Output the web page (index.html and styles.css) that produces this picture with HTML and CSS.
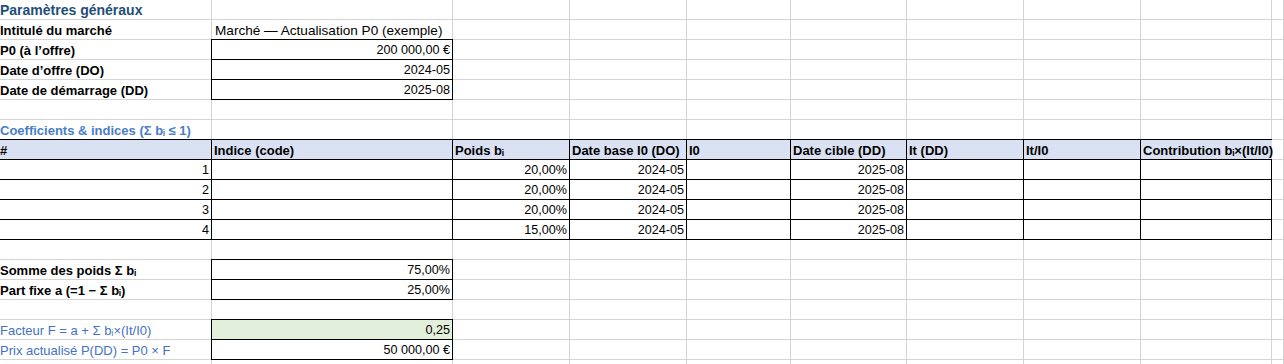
FILE: index.html
```html
<!DOCTYPE html>
<html lang="fr">
<head>
<meta charset="utf-8">
<title>Actualisation P0</title>
<link rel="stylesheet" href="styles.css">
</head>
<body>
<div class="sheet">
  <!-- row 1 -->
  <div class="title">Paramètres généraux</div><div></div><div></div><div></div><div></div><div></div><div></div><div></div><div></div><div></div>
  <!-- row 2 -->
  <div class="lbl">Intitulé du marché</div><div class="txt">Marché — Actualisation P0 (exemple)</div><div></div><div></div><div></div><div></div><div></div><div></div><div></div><div></div>
  <!-- row 3 -->
  <div class="lbl">P0 (à l’offre)</div><div class="bx num">200 000,00 €</div><div></div><div></div><div></div><div></div><div></div><div></div><div></div><div></div>
  <!-- row 4 -->
  <div class="lbl">Date d’offre (DO)</div><div class="bx num">2024-05</div><div></div><div></div><div></div><div></div><div></div><div></div><div></div><div></div>
  <!-- row 5 -->
  <div class="lbl">Date de démarrage (DD)</div><div class="bx num">2025-08</div><div></div><div></div><div></div><div></div><div></div><div></div><div></div><div></div>
  <!-- row 6 -->
  <div></div><div></div><div></div><div></div><div></div><div></div><div></div><div></div><div></div><div></div>
  <!-- row 7 -->
  <div class="section">Coefficients &amp; indices (Σ bᵢ ≤ 1)</div><div></div><div></div><div></div><div></div><div></div><div></div><div></div><div></div><div></div>
  <!-- row 8 header -->
  <div class="bx hd">#</div><div class="bx hd">Indice (code)</div><div class="bx hd">Poids bᵢ</div><div class="bx hd">Date base I0 (DO)</div><div class="bx hd">I0</div><div class="bx hd">Date cible (DD)</div><div class="bx hd">It (DD)</div><div class="bx hd">It/I0</div><div class="bx hd hd-last">Contribution bᵢ×(It/I0)</div><div></div>
  <!-- rows 9-12 -->
  <div class="bx num">1</div><div class="bx"></div><div class="bx num">20,00%</div><div class="bx num">2024-05</div><div class="bx"></div><div class="bx num">2025-08</div><div class="bx"></div><div class="bx"></div><div class="bx"></div><div></div>
  <div class="bx num">2</div><div class="bx"></div><div class="bx num">20,00%</div><div class="bx num">2024-05</div><div class="bx"></div><div class="bx num">2025-08</div><div class="bx"></div><div class="bx"></div><div class="bx"></div><div></div>
  <div class="bx num">3</div><div class="bx"></div><div class="bx num">20,00%</div><div class="bx num">2024-05</div><div class="bx"></div><div class="bx num">2025-08</div><div class="bx"></div><div class="bx"></div><div class="bx"></div><div></div>
  <div class="bx num">4</div><div class="bx"></div><div class="bx num">15,00%</div><div class="bx num">2024-05</div><div class="bx"></div><div class="bx num">2025-08</div><div class="bx"></div><div class="bx"></div><div class="bx"></div><div></div>
  <!-- row 13 -->
  <div></div><div></div><div></div><div></div><div></div><div></div><div></div><div></div><div></div><div></div>
  <!-- row 14 -->
  <div class="lbl">Somme des poids Σ bᵢ</div><div class="bx num">75,00%</div><div></div><div></div><div></div><div></div><div></div><div></div><div></div><div></div>
  <!-- row 15 -->
  <div class="lbl">Part fixe a (=1 − Σ bᵢ)</div><div class="bx num">25,00%</div><div></div><div></div><div></div><div></div><div></div><div></div><div></div><div></div>
  <!-- row 16 -->
  <div></div><div></div><div></div><div></div><div></div><div></div><div></div><div></div><div></div><div></div>
  <!-- row 17 -->
  <div class="calc">Facteur F = a + Σ bᵢ×(It/I0)</div><div class="bx num green">0,25</div><div></div><div></div><div></div><div></div><div></div><div></div><div></div><div></div>
  <!-- row 18 -->
  <div class="calc">Prix actualisé P(DD) = P0 × F</div><div class="bx num">50 000,00 €</div><div></div><div></div><div></div><div></div><div></div><div></div><div></div><div></div>
  <!-- row 19 -->
  <div></div><div></div><div></div><div></div><div></div><div></div><div></div><div></div><div></div><div></div>
</div>
</body>
</html>
```

FILE: styles.css
```css
html, body {
  margin: 0;
  padding: 0;
  background: #ffffff;
  overflow: hidden;
}

body {
  font-family: "Liberation Sans", "DejaVu Sans", sans-serif;
  font-size: 13px;
  color: #000000;
}

.sheet {
  display: grid;
  grid-template-columns: 212px 241px 117px 117px 104px 116px 117px 117px 131px 1fr;
  grid-auto-rows: 20px;
  width: 100%;
}

.sheet > div {
  box-sizing: border-box;
  height: 20px;
  border-right: 1px solid #d4d4d4;
  border-bottom: 1px solid #d4d4d4;
  padding: 1px 2px 0 2px;
  line-height: 19px;
  white-space: nowrap;
  overflow: visible;
}

.sheet > div:nth-child(10n+1) {
  padding-left: 0;
}

.sheet > .title {
  font-weight: bold;
  font-size: 14px;
  color: #1f4e79;
}

.sheet > .section {
  font-weight: bold;
  color: #4a7ec6;
}

.sheet > .lbl {
  font-weight: bold;
}

.sheet > .calc {
  color: #4472c4;
}

.sheet > .txt {
  font-size: 13.6px;
  padding-left: 3px;
}

.sheet > .num {
  text-align: right;
  font-size: 12.6px;
}

.sheet > .bx {
  border-right-color: #000000;
  border-bottom-color: #000000;
  box-shadow: -1px 0 0 #000000, 0 -1px 0 #000000, -1px -1px 0 #000000;
}

.sheet > .hd {
  background: #d9e1f2;
  font-weight: bold;
}

.sheet > .hd-last {
  border-right-color: #d9e1f2;
}

.sheet > .green {
  background: #e2efda;
}
```
